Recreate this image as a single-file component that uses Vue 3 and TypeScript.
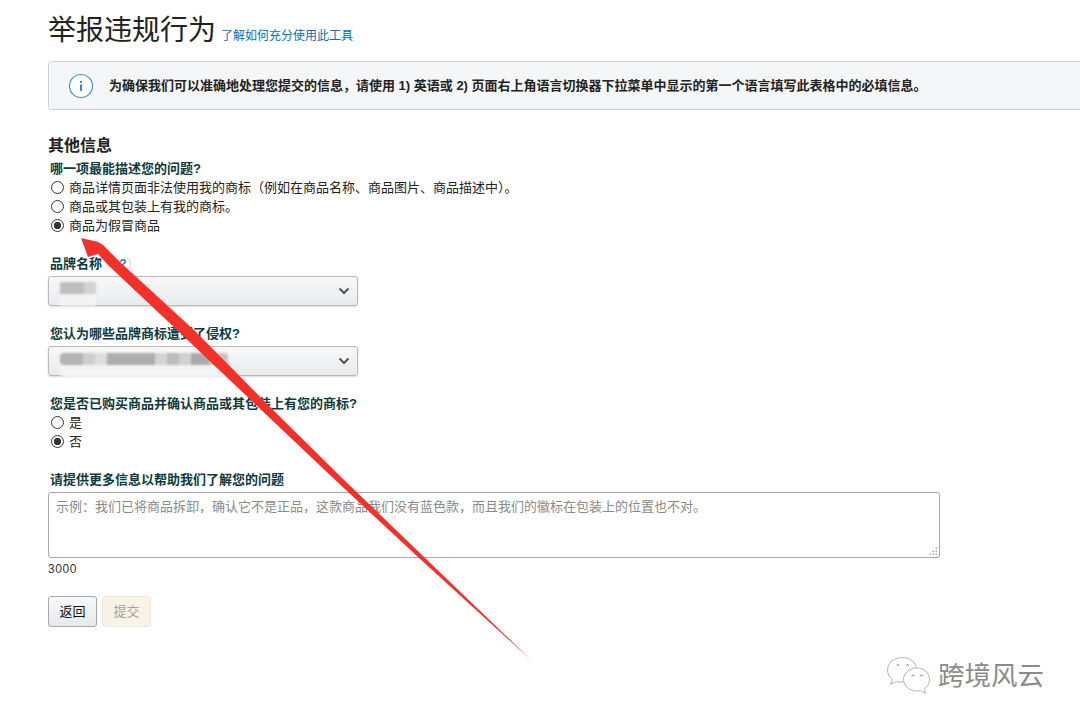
<script setup lang="ts">
const issueOptions = [
  { text: '商品详情页面非法使用我的商标（例如在商品名称、商品图片、商品描述中）。', on: false },
  { text: '商品或其包装上有我的商标。', on: false },
  { text: '商品为假冒商品', on: true },
]
const buyOptions = [
  { text: '是', on: false },
  { text: '否', on: true },
]
</script>

<template>
  <div class="page">
    <header class="title-row">
      <h1>举报违规行为</h1>
      <a class="help">了解如何充分使用此工具</a>
    </header>

    <div class="banner">
      <svg class="info" width="26" height="26" viewBox="0 0 26 26">
        <circle cx="13" cy="13" r="11.5" fill="#fff" stroke="#4a90b8" stroke-width="1.2" />
        <rect x="12.1" y="11.5" width="1.8" height="6.5" fill="#2f7fb0" />
        <rect x="12.1" y="8" width="1.8" height="1.9" fill="#2f7fb0" />
      </svg>
      <p>为确保我们可以准确地处理您提交的信息，请使用 1) 英语或 2) 页面右上角语言切换器下拉菜单中显示的第一个语言填写此表格中的必填信息。</p>
    </div>

    <h2>其他信息</h2>
    <div class="label first">哪一项最能描述您的问题?</div>
    <div class="radios">
      <div v-for="o in issueOptions" :key="o.text" class="radio">
        <span class="dot" :class="{ on: o.on }"></span><span class="opt">{{ o.text }}</span>
      </div>
    </div>

    <div class="label brand">品牌名称<span class="q">?</span></div>
    <div class="select">
      <i class="strip one"></i>
      <svg class="chev" width="12" height="8" viewBox="0 0 12 8"><path d="M1.500 1.500 6 6l4.500-4.500" fill="none" stroke="#555" stroke-width="2" /></svg>
    </div>

    <div class="label gap">您认为哪些品牌商标遭到了侵权?</div>
    <div class="select">
      <i class="strip two"></i>
      <svg class="chev" width="12" height="8" viewBox="0 0 12 8"><path d="M1.500 1.500 6 6l4.500-4.500" fill="none" stroke="#555" stroke-width="2" /></svg>
    </div>

    <div class="label gap">您是否已购买商品并确认商品或其包装上有您的商标?</div>
    <div class="radios buy">
      <div v-for="o in buyOptions" :key="o.text" class="radio">
        <span class="dot" :class="{ on: o.on }"></span><span class="opt">{{ o.text }}</span>
      </div>
    </div>

    <div class="label more">请提供更多信息以帮助我们了解您的问题</div>
    <div class="area-wrap">
      <textarea class="area" placeholder="示例：我们已将商品拆卸，确认它不是正品，这款商品我们没有蓝色款，而且我们的徽标在包装上的位置也不对。"></textarea>
      <svg class="grip" width="9" height="9" viewBox="0 0 9 9" fill="#a9a9a9">
        <rect x="6.500" y="0.500" width="1.500" height="1.500" />
        <rect x="3.500" y="3.500" width="1.500" height="1.500" />
        <rect x="6.500" y="3.500" width="1.500" height="1.500" />
        <rect x="0.500" y="6.500" width="1.500" height="1.500" />
        <rect x="3.500" y="6.500" width="1.500" height="1.500" />
        <rect x="6.500" y="6.500" width="1.500" height="1.500" />
      </svg>
    </div>
    <div class="count">3000</div>

    <div class="actions">
      <button class="btn back">返回</button>
      <button class="btn submit">提交</button>
    </div>

    <svg class="arrow" width="1080" height="726" viewBox="0 0 1080 726">
      <polygon points="81,238 98,242 103,245 121,263 195,331 268,405 342,478 424,557 531,660 419,558 332,477 255,404 177,330 108,265 98,254 88,257" fill="#f4302b" />
    </svg>

    <div class="mark">
      <svg width="44" height="38" viewBox="0 0 44 38" fill="#fff" stroke="#b5b5b5" stroke-width="1">
        <path d="M15.500 0.500C7.500 0.500 0.500 6 0.500 13c0 4 2 7 5 9.500l-2 5 6-3c1.500.4 3 .6 5 .6 8 0 15-5.100 15-12.100S23.500 0.500 15.500 0.500Z" />
        <path d="M30 11c-7 0-13.500 5-13.500 11.500S23 34 30 34c1.300 0 2.600-.2 3.800-.5l5 3-1.500-4.800c3.300-2 5.200-5.200 5.200-9.200C42.500 16 37 11 30 11Z" />
        <path d="M9.500 8.500l1.500-1 1.500 1M19 8.500l1.500-1 1.500 1M24.500 19l1.500-1 1.500 1M33 19l1.500-1 1.500 1" fill="none" stroke="#888" />
      </svg>
      <span>跨境风云</span>
    </div>
  </div>
</template>

<style>
html, body { margin: 0; background: #fff; }
</style>

<style scoped>
.page {
  position: relative;
  width: 1080px;
  height: 726px;
  overflow: hidden;
  box-sizing: border-box;
  padding: 15px 0 0 48px;
  background: #fff;
  color: #111;
  font-family: "Liberation Sans", "Noto Sans CJK SC", sans-serif;
  font-size: 13px;
}
.title-row { display: flex; align-items: flex-end; height: 32px; }
h1 { margin: 0; font-size: 28px; line-height: 32px; font-weight: 400; color: #222; }
.help { margin: 0 0 3px 5px; font-size: 12px; line-height: 16px; color: #0a6db0; }
.banner {
  display: flex;
  align-items: center;
  box-sizing: border-box;
  width: 1100px;
  height: 49px;
  margin-top: 14px;
  padding-left: 19px;
  background: #f5f6f7;
  border: 1px solid #c9d3dc;
  border-radius: 4px;
}
.banner p { margin: -2px 0 0 15px; font-size: 13px; font-weight: 700; color: #222; white-space: nowrap; }
h2 { margin: 26px 0 0; font-size: 16px; line-height: 20px; font-weight: 700; color: #222; }
.label { margin-left: 2px; line-height: 16px; font-weight: 700; color: #0c3a40; }
.label.first { margin-top: 5px; }
.label.brand { margin-top: 21px; display: flex; align-items: center; }
.label.gap { margin-top: 20px; }
.label.more { margin-top: 21px; }
.q {
  display: inline-block;
  width: 14px;
  height: 14px;
  margin-left: 14px;
  border-radius: 50%;
  text-align: center;
  line-height: 14px;
  font-size: 12px;
  color: #2c78b8;
  box-shadow: 1px 0 2px #ccc;
}
.radios { margin: 1px 0 0 3px; }
.radio { display: flex; align-items: center; height: 19px; color: #222; }
.opt { margin-top: -2px; margin-left: -1px; }
.dot {
  box-sizing: border-box;
  width: 13px;
  height: 13px;
  margin-right: 6px;
  border: 1px solid #333;
  border-radius: 50%;
  background: #fff;
}
.dot.on { background: radial-gradient(circle, #333 0 3.4px, #fff 4px); }
.select {
  display: flex;
  align-items: center;
  justify-content: space-between;
  box-sizing: border-box;
  width: 310px;
  height: 30px;
  margin-top: 4px;
  padding: 0 7px 0 11px;
  border: 1px solid #b9b9b9;
  border-radius: 3px;
  background: linear-gradient(#f8f8f9, #e9eaec);
  box-shadow: 0 1px 2px rgba(0, 0, 0, .15);
}
.strip { display: block; height: 12px; filter: blur(0.8px); }
.strip.one {
  width: 36px;
  margin-top: -7px;
  background: linear-gradient(90deg, #bfbfbf 0 24px, #d2d2d2 24px);
  box-shadow: 0 12px 0 #f3f3f3;
}
.strip.two {
  width: 168px;
  margin-top: -4px;
  border-radius: 4px;
  background: linear-gradient(90deg,
    #b4b4b4 0 23px, #cdcdcd 23px 35px, #dedede 35px 47px,
    #adadad 47px 95px, #d4d4d4 95px 107px, #bcbcbc 107px 119px,
    #d0d0d0 119px 131px, #a9a9a9 131px 149px, #c4c4c4 149px);
  box-shadow: 0 12px 0 #f4f4f4;
}
.area-wrap { position: relative; width: 892px; margin-top: 4px; }
.area {
  display: block;
  box-sizing: border-box;
  width: 892px;
  height: 66px;
  margin: 0;
  padding: 6px 7px;
  border: 1px solid #a8a8a8;
  border-radius: 3px;
  resize: none;
  font: 13px/16px "Liberation Sans", "Noto Sans CJK SC", sans-serif;
  color: #333;
  background: #fff;
}
.area::placeholder { color: #8a8a8a; opacity: 1; }
.grip { position: absolute; right: 2px; bottom: 2px; }
.count { margin-top: 3px; font-size: 12px; line-height: 16px; letter-spacing: .6px; color: #333; }
.actions { display: flex; gap: 5px; margin-top: 19px; }
.btn {
  box-sizing: border-box;
  width: 49px;
  height: 31px;
  padding: 0 0 2px;
  border-radius: 3px;
  font: 13px "Liberation Sans", "Noto Sans CJK SC", sans-serif;
}
.back { border: 1px solid #a6a8ac; background: linear-gradient(#f7f8fa, #e6e8ec); color: #111; }
.submit { border: 1px solid #f0e9da; background: #f8f3e6; color: #a5a29a; }
.arrow { position: absolute; left: 0; top: 0; pointer-events: none; }
.mark {
  position: absolute;
  left: 887px;
  top: 657px;
  display: flex;
  align-items: center;
  gap: 7px;
}
.mark span { font-size: 26.500px; line-height: 36px; color: #8b8b8b; text-shadow: 0 1px 1px #fff; }
</style>
